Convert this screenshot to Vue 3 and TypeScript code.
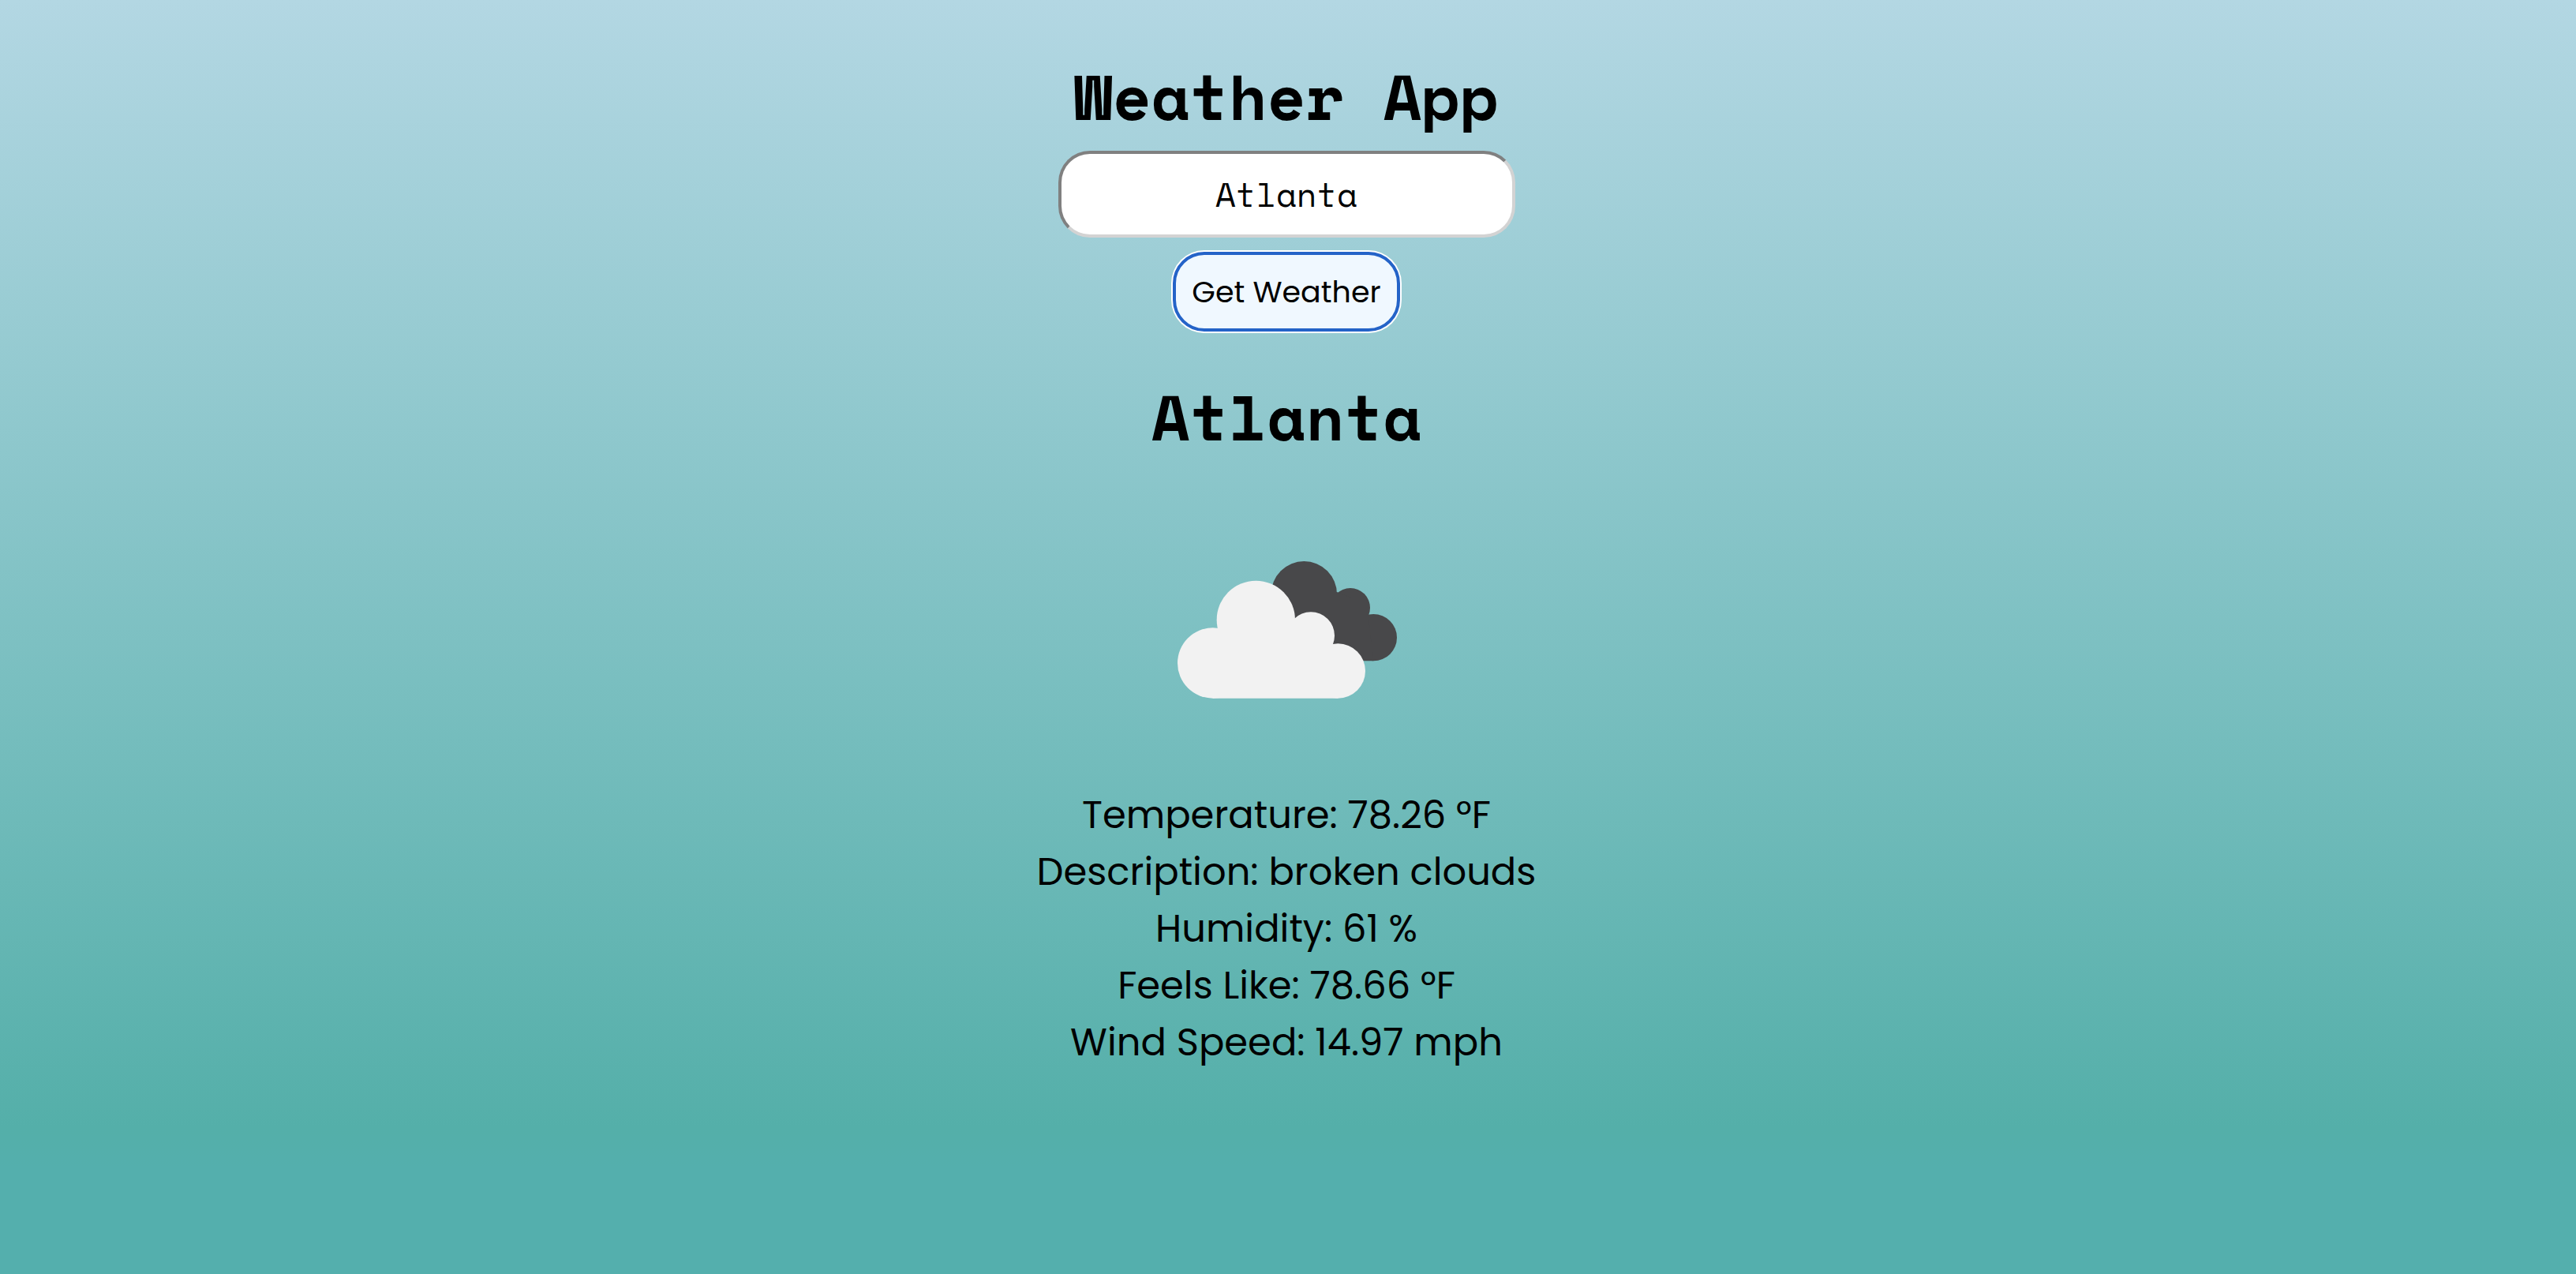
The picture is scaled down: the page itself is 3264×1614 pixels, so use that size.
<script setup lang="ts">
import { ref } from 'vue'

interface Reading {
  label: string
  value: string
}

const query = ref('Atlanta')
const city = ref('Atlanta')
const readings = ref<Reading[]>([
  { label: 'Temperature', value: '78.26 °F' },
  { label: 'Description', value: 'broken clouds' },
  { label: 'Humidity', value: '61 %' },
  { label: 'Feels Like', value: '78.66 °F' },
  { label: 'Wind Speed', value: '14.97 mph' },
])

function search(): void {
  city.value = query.value
}
</script>

<template>
  <main class="page">
    <h1 class="heading">Weather App</h1>
    <form class="search" @submit.prevent="search">
      <input v-model="query" class="field" type="text" aria-label="City" />
      <button class="submit" type="submit">Get Weather</button>
    </form>
    <h2 class="heading">{{ city }}</h2>
    <svg class="icon" viewBox="0 0 960 660" role="img" aria-label="Broken clouds">
      <g fill="#48484a">
        <circle cx="547" cy="188" r="125" />
        <circle cx="723" cy="240" r="75" />
        <circle cx="811" cy="353" r="89" />
        <path d="M480 180H672L723 200L790 264L811 442H560Z" />
      </g>
      <g fill="#f2f2f2">
        <circle cx="200" cy="450" r="134" />
        <circle cx="364" cy="286" r="149" />
        <circle cx="573" cy="346" r="90" />
        <circle cx="676" cy="480" r="104" />
        <path d="M200 584V400L300 300H513L573 340L640 400L676 584Z" />
      </g>
    </svg>
    <div class="readings">
      <p v-for="item in readings" :key="item.label" class="reading">
        {{ item.label }}: {{ item.value }}
      </p>
    </div>
  </main>
</template>

<style>
body {
  margin: 0;
}
</style>

<style scoped>
.page {
  box-sizing: border-box;
  min-height: 100vh;
  padding: 72px 4px 0 0;
  display: flex;
  flex-direction: column;
  align-items: center;
  background: linear-gradient(to bottom, #b3d7e3 0, #54afa9 1430px, #54afad 1480px);
  color: #000;
  font-family: Poppins, Inter, sans-serif;
}

.heading {
  margin: 0;
  font-family: 'Space Mono', 'Liberation Mono', monospace;
  font-size: 80px;
  font-weight: 700;
  line-height: 100px;
}

.search {
  margin: 19px 0 58px;
  display: flex;
  flex-direction: column;
  align-items: center;
  gap: 18px;
}

.field {
  box-sizing: border-box;
  width: 579px;
  height: 110px;
  padding: 0 20px;
  border: 4px solid;
  border-color: #808080 #d3d3d3 #d3d3d3 #808080;
  border-radius: 40px;
  background: #fff;
  color: #000;
  font-family: 'Space Mono', 'Liberation Mono', monospace;
  font-size: 42px;
  text-align: center;
}

.submit {
  box-sizing: border-box;
  height: 101px;
  padding: 0 20px;
  border: 4px solid #2463c8;
  border-radius: 40px;
  background: #f0f8ff;
  box-shadow: 0 0 0 2px #fff;
  color: #000;
  font-family: inherit;
  font-size: 38px;
}

.icon {
  width: 320px;
  height: 220px;
  margin: 112px 0 87px;
}

.reading {
  margin: 0;
  font-size: 48px;
  line-height: 72px;
  text-align: center;
}
</style>
